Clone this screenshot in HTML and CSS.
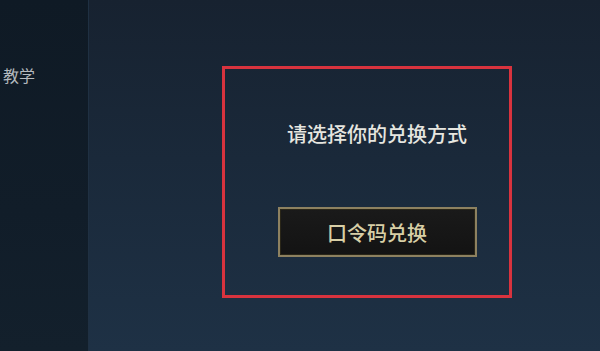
FILE: index.html
```html
<!DOCTYPE html>
<html lang="zh-CN">
<head>
<meta charset="utf-8">
<link rel="stylesheet" href="styles.css">
</head>
<body>
<div class="app">
  <aside class="sidebar">
    <div class="nav-item">教学</div>
  </aside>
  <main class="main">
    <section class="redeem-box">
      <div class="title">请选择你的兑换方式</div>
      <button class="btn">口令码兑换</button>
    </section>
  </main>
</div>
</body>
</html>
```
FILE: styles.css
```css
html, body {
  margin: 0;
  padding: 0;
  width: 600px;
  height: 351px;
  overflow: hidden;
  font-family: "Noto Sans CJK SC", "Noto Sans", sans-serif;
}
.app {
  display: flex;
  width: 600px;
  height: 351px;
}
.sidebar {
  width: 88px;
  flex: none;
  background: linear-gradient(180deg, #0f1a25 0%, #111d29 60%, #13202c 100%);
  padding-top: 64px;
  box-sizing: border-box;
}
.nav-item {
  padding-left: 3px;
  font-size: 16px;
  line-height: 22px;
  color: #b4b9be;
}
.main {
  flex: 1;
  background: linear-gradient(180deg, #172230 0%, #1a293a 45%, #1e3145 100%);
  box-shadow: inset 1px 0 0 #1f3042;
  padding: 66px 0 0 134px;
  box-sizing: border-box;
}
.redeem-box {
  width: 290px;
  height: 232px;
  box-sizing: border-box;
  border: 3px solid #d8333e;
  display: flex;
  flex-direction: column;
  align-items: center;
  padding-top: 51px;
}
.title {
  font-size: 20px;
  line-height: 28px;
  color: #e6e6e0;
  font-weight: 500;
  margin-left: 20px;
}
.btn {
  margin-top: 59px;
  margin-left: 20px;
  width: 199px;
  height: 50px;
  box-sizing: border-box;
  border: 2px solid #8d8160;
  background: linear-gradient(180deg, #1a1a1a 0%, #131313 100%);
  box-shadow: inset 0 0 0 1px #2a2618;
  color: #d8cfa6;
  font-family: "Noto Sans CJK SC", "Noto Sans", sans-serif;
  font-size: 20px;
  font-weight: 500;
  padding: 0;
}
```
